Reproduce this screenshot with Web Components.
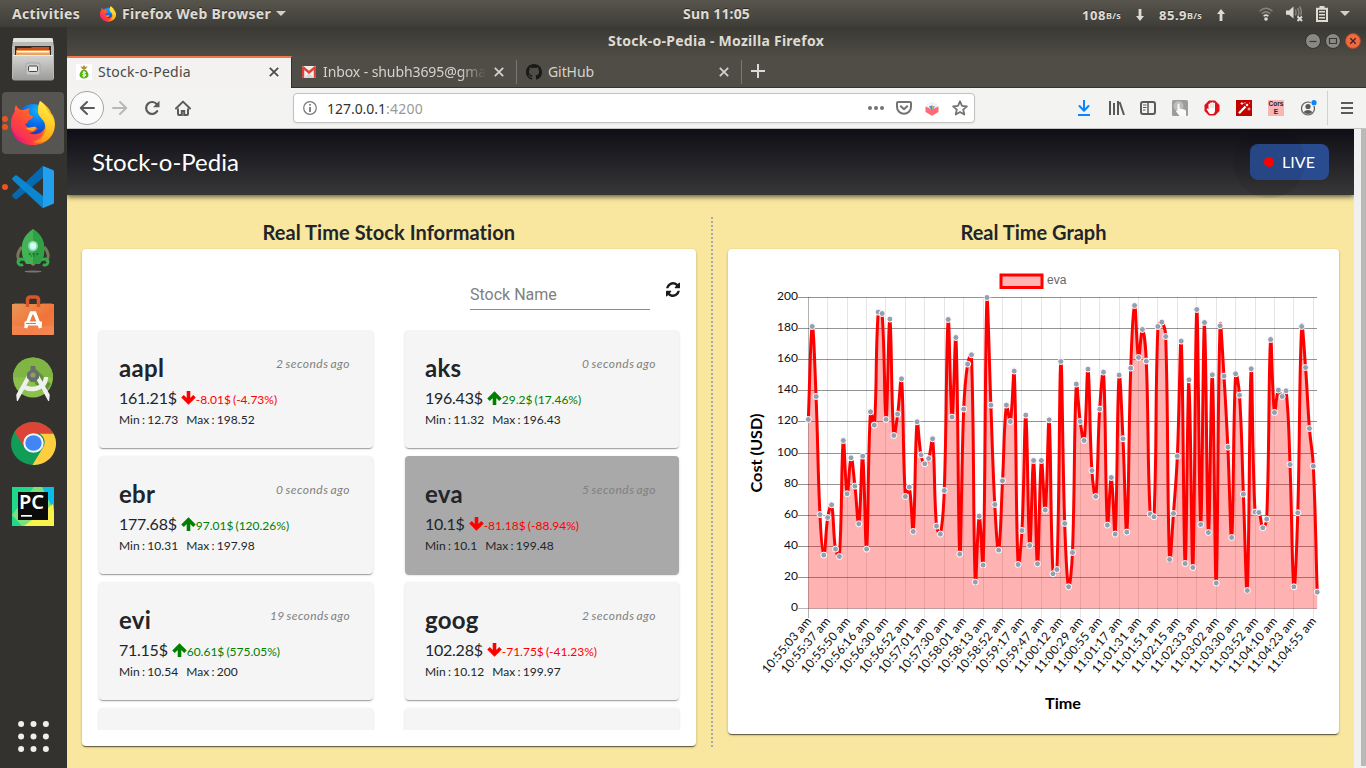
<!DOCTYPE html>
<html lang="en">
<head>
<meta charset="utf-8">
<title>Stock-o-Pedia</title>
<style>
html,body{margin:0;height:100%;overflow:hidden}
body{font-family:"Noto Sans","Open Sans",sans-serif}
</style>
</head>
<body>
<desktop-shell></desktop-shell>
<script>
const define = (name, html, setup) => customElements.define(name, class extends HTMLElement {
  constructor() { super(); this.attachShadow({ mode: 'open' }); }
  connectedCallback() {
    this.shadowRoot.innerHTML = typeof html === 'function' ? html(this) : html;
    if (setup) setup(this, this.shadowRoot);
  }
});

/* ---------- icons: name -> [viewBox, markup] ---------- */
const firefox = `<defs>
<linearGradient id="a" x1=".05" y1=".75" x2="1" y2=".35"><stop offset="0" stop-color="#e31587"/><stop offset=".28" stop-color="#ff3647"/><stop offset=".6" stop-color="#ff8a16"/><stop offset="1" stop-color="#ffcb1f"/></linearGradient>
<linearGradient id="b" x1=".7" y1="0" x2=".4" y2="1"><stop offset="0" stop-color="#fff44f"/><stop offset=".45" stop-color="#ffd02a"/><stop offset="1" stop-color="#ff9a0e"/></linearGradient>
<radialGradient id="c" cx=".65" cy=".2" r=".9"><stop offset="0" stop-color="#12b5ff"/><stop offset=".5" stop-color="#0a6be8"/><stop offset="1" stop-color="#28239a"/></radialGradient>
<linearGradient id="d" x1="0" y1="1" x2=".8" y2="0"><stop offset="0" stop-color="#f0206a"/><stop offset=".5" stop-color="#ff4a3a"/><stop offset="1" stop-color="#ff8020"/></linearGradient></defs>
<circle cx="22" cy="25" r="19" fill="url(#a)"/>
<circle cx="22" cy="20" r="16" fill="url(#c)"/>
<path d="M29 1C35 5 39 9 40 13c3 3 4 8 4 11 0 12-9 21-22 21S0 37 0 24c0-5 1-10 4-13l2 2c7 3 3 17 14 22 7 2 14-2 14-9 0-9-8-10-7-17 0-3 1-6 2-8z" fill="url(#a)"/>
<path d="M29 1c5 3 7 8 8 11 4 4 7 9 6 15 0 5-3 9-6 12-3 3-10 4-15 3 8-1 13-7 13-14 0-9-9-10-8-18 0-4 1-6 2-9z" fill="url(#b)"/>
<path d="M5 5c2 4 4 5 7 5 2-1 5-1 7-2-2 3-1 5 0 7l3 1c0 3-4 4-5 5 0 2-1 2-3 3 3 6 9 4 13 4-2 3-6 5-9 5 7 3 13 0 15-4 0 7-5 11-11 11C10 40 0 34 0 24c0-4 1-8 4-12-1-3 0-5 1-7z" fill="url(#d)"/>
<path d="M15 28c4 0 6-2 10-1 1 1-1 3-3 4-3 0-5-1-7-3z" fill="#ffa51e"/>`;

const ICONS = {
firefox: ['0 0 44 46', firefox],
caret: ['0 0 10 5', '<path d="M0 0h10L5 5z" fill="#d2d0c8"/>'],
down: ['0 0 8 12', '<path d="M2.6 0h2.8v7H8l-4 5-4-5h2.6z" fill="#dfdbd2"/>'],
up: ['0 0 8 12', '<path d="M2.6 12h2.8V5H8L4 0 0 5h2.6z" fill="#dfdbd2"/>'],
wifi: ['0 0 14 14', '<g fill="none" stroke-width="1.5"><path d="M.6 4.2Q7-1.6 13.400 4.200" stroke="#85837b"/><path d="M2.8 6.700Q7 3 11.200 6.700" stroke="#85837b"/><path d="M4.600 9.300Q7 7 9.400 9.300" stroke="#dfdbd2"/></g><circle cx="7" cy="12" r="1.800" fill="#dfdbd2"/>'],
sound: ['0 0 17 16', '<path d="M0 4.500h3L7.500.5v12L3 8.800H0z" fill="#dfdbd2"/><g fill="none" stroke="#85837b" stroke-width="1.500"><path d="M9.300 3.500q1.500 3 0 6M11.500 2q2.700 4.500 0 9M13.500.5q3 4.500 1 9"/></g><path d="M11.500 10.500l4.500 4.500m0-4.500l-4.500 4.500" stroke="#dfdbd2" stroke-width="2"/>'],
battery: ['0 0 12 16', '<path d="M1 2.800h10V15H1z" fill="none" stroke="#dfdbd2" stroke-width="2"/><path d="M3.500 0h5v3h-5zM3 5h6v1.500H3zM3 8h6v1.500H3zM3 11h6v1.500H3z" fill="#dfdbd2"/>'],
files: ['0 0 44 44', `<defs><linearGradient id="f" x2="0" y2="1"><stop stop-color="#d5d5d3"/><stop offset="1" stop-color="#9b9b99"/></linearGradient></defs>
<path d="M3.500 1h37q1 0 1.200 1L43 10v31q0 2-2 2H3q-2 0-2-2V10L2.300 2Q2.500 1 3.500 1z" fill="#b9b9b7"/><path d="M3.500 1h37q1 0 1.200 1l.6 3H1.700l.6-3Q2.500 1 3.500 1z" fill="#e3e3e1"/>
<path d="M4 9h36v10H4z" fill="#322c28"/><path d="M6 11h14l1-1h17v4H6z" fill="#c8501e"/><path d="M5 13h34v5H5z" fill="#f29a4a"/><path d="M6 14h32v1.500H6z" fill="#fff"/><path d="M5 16h34v2H5z" fill="#e9a35c"/>
<path d="M2 18h40v24q0 1.500-1.500 1.500h-37Q2 43.500 2 42z" fill="url(#f)"/><path d="M2 18h40v1H2z" fill="#eee"/>
<rect x="15" y="26" width="14" height="12" rx="2" fill="#c9c9c7" stroke="#a5a5a3"/><rect x="17.500" y="29" width="9" height="5.500" rx="1" fill="#eee" stroke="#444"/>`],
vscode: ['0 0 42 42', '<path d="M31 0l10 4q1 .5 1 1.500v31q0 1-1 1.500l-10 4z" fill="#22a0ee"/><path d="M31 0v12L5 33q-1 .6-2 0L.500 30.500q-.8-1 0-2L30 .5z" fill="#0668ae"/><path d="M31 42V30L5 9.500q-1-.6-2 0L.500 12q-.8 1 0 2L30 41.500z" fill="#0b86cf"/>'],
rocket: ['0 0 36 44', '<ellipse cx="18" cy="42.500" rx="9" ry="1" fill="#77766f"/><path d="M6 18q-7 8-2 15M30 18q7 8 2 15" fill="none" stroke="#7b7659" stroke-width="3"/><path d="M12 33h12l-6 4z" fill="#84805f"/><path d="M18 0c9 6 12 12 12 20 0 7-2 12-5 15H11c-3-3-5-8-5-15C6 12 9 6 18 0z" fill="#43b356"/><path d="M18 0c9 6 12 12 12 20 0 7-2 12-5 15h-7z" fill="#2fa046"/><circle cx="18" cy="17" r="5.200" fill="#8ed9b5"/><circle cx="18" cy="17" r="3.400" fill="#c7fff0"/><circle cx="17" cy="16" r="1.300" fill="#fff"/><path d="M13.500 25h2m2 0h2m2 0h2m-8 2h1m2 0h1" stroke="#116326" stroke-width="1.500"/><g fill="none" stroke="#35ad4b" stroke-width="3"><path d="M8.500 31.500a3.500 3 0 1 0-1 4M27.500 31.500a3.500 3 0 1 1 1 4"/></g>'],
bag: ['0 0 42 41', `<defs><linearGradient id="g" x2="1" y2="1"><stop stop-color="#e9965a"/><stop offset=".6" stop-color="#f07436"/><stop offset="1" stop-color="#f2834d"/></linearGradient></defs><path d="M2 10V8h10l2 2h14l2-2h10v2z" fill="#b4441b"/><path d="M0 9h42v30q0 1-1 1H1q-1 0-1-1z" fill="url(#g)"/><path d="M0 31h42v8q0 1-1 1H1q-1 0-1-1z" fill="#f58b58" opacity=".6"/><path d="M15.500 12V5q0-3 3-3h5q3 0 3 3v7" fill="none" stroke="#d9562a" stroke-width="3.500"/><path d="M13.500 33L19.300 18h3.400l5.800 15" fill="none" stroke="#fff" stroke-width="3.400"/><path d="M12.500 26.500h17.500v4h-17.500z" fill="#fff"/><path d="M14 28h10v1H14z" fill="#ee6d2d"/>`],
studio: ['0 0 42 44', '<circle cx="21" cy="20.500" r="20" fill="#8bc04b"/><path d="M1 20.500a20 20 0 0 1 40 0z" fill="#80b544"/><path d="M22 10l17 17-6 9-10-9z" fill="#5e9138"/><path d="M11 29.500Q17 33 24 31.500 34 29 34 20" fill="none" stroke="#eef0ea" stroke-width="4.500"/><path d="M17 22L5.500 43l-.5-5 10-18zM25 22l11.500 21 .5-5-10-18z" fill="#eef0f0" stroke="#eef0f0" stroke-width="1.500"/><path d="M18.500 9h5v4l3.500 3v5l-4 4h-4l-4-4v-5l3.500-3z" fill="#6a6d6e"/><circle cx="21" cy="18" r="2.600" fill="#8ba05e"/>'],
chrome: ['0 0 44 44', '<circle cx="22" cy="22" r="22" fill="#109d58"/><path d="M22 0a22 22 0 0 1 19.600 12H22a10 10 0 0 0-9.300 13.500L3.500 10A22 22 0 0 1 22 0z" fill="#db4437"/><path d="M41.600 12A22 22 0 0 1 21 44l10-17.500A10 10 0 0 0 28 12z" fill="#ffcd40"/><circle cx="22" cy="21.500" r="10" fill="#f5f5f5"/><circle cx="22" cy="21.500" r="8" fill="#4285f4"/>'],
pycharm: ['0 0 42 42', '<path d="M0 2h42v39H0z" fill="#21d789"/><path d="M26 2h16v30z" fill="#08bde8"/><path d="M0 30L22 2h8l12 24v15H10z" fill="#7fe07a"/><path d="M12 41l29-22 1 8v14z" fill="#f8f24a"/><path d="M6 7h30v28H6z" fill="#0b0b0b"/><path d="M9 30h11v1.700H9z" fill="#fff"/>'],
grid: ['0 0 30 30', [3,15,27].map(y=>[3,15,27].map(x=>`<circle cx="${x}" cy="${y}" r="2.900" fill="#eeeeec"/>`).join('')).join('')],
money: ['0 0 16 16', '<path d="M0 0h16v16H0z" fill="#fff"/><path d="M4.500 2l2 1L8 1l1.500 2 2-1L10 5H6z" fill="#b98a4c"/><path d="M8 5c3 1.500 4.500 3.500 4.500 6 0 2-2 3.500-4.500 3.500S3.500 13 3.500 11C3.500 8.500 5 6.500 8 5z" fill="#5ab312"/><path d="M9.800 8.500q-3-1-3.200.5 0 .8 1.500 1 1.700.2 1.700 1.200-.4 1.500-3.500.5M8 7v6.500" fill="none" stroke="#fff" stroke-width="1"/>'],
close: ['0 0 10 10', '<path d="M.8.8l8.400 8.400m0-8.400L.8 9.200" stroke="currentColor" stroke-width="1.700"/>'],
plus: ['0 0 14 14', '<path d="M7 0v14M0 7h14" stroke="#dcdad5" stroke-width="2"/>'],
gmail: ['0 0 14 12', '<path d="M1 0h12q1 0 1 1v10q0 1-1 1H1q-1 0-1-1V1q0-1 1-1z" fill="#f2efeb"/><path d="M2.500 12l4.500-5 4.500 5z" fill="#d8d5d0"/><path d="M0 1.500Q0 0 1.300 0L7 4.800 12.700 0Q14 0 14 1.500V11q0 1-1 1h-1.200V4L7 8 2.200 4v8H1q-1 0-1-1z" fill="#dc4437"/>'],
github: ['0 0 16 16', '<path fill="#191919" d="M8 0C3.580 0 0 3.580 0 8c0 3.540 2.290 6.530 5.470 7.590.4.070.55-.17.55-.38 0-.19-.01-.82-.01-1.490-2.010.37-2.530-.49-2.690-.94-.09-.23-.48-.94-.82-1.130-.28-.15-.68-.52-.01-.53.63-.01 1.080.58 1.230.82.720 1.210 1.870.87 2.330.66.070-.52.280-.87.510-1.070-1.780-.2-3.640-.89-3.640-3.950 0-.87.310-1.590.820-2.150-.08-.2-.36-1.020.08-2.120 0 0 .67-.21 2.200.82.640-.18 1.320-.27 2-.27s1.360.09 2 .27c1.530-1.040 2.200-.82 2.200-.82.440 1.100.160 1.920.080 2.120.510.560.820 1.270.820 2.150 0 3.070-1.870 3.750-3.650 3.950.290.250.540.730.540 1.480 0 1.070-.01 1.930-.01 2.200 0 .21.150.46.550.38A8.010 8.010 0 0 0 16 8c0-4.420-3.580-8-8-8z"/>'],
back: ['0 0 16 16', '<path d="M15 8H2m6-6L1.800 8 8 14" fill="none" stroke="currentColor" stroke-width="2" stroke-linecap="round" stroke-linejoin="round"/>'],
forward: ['0 0 16 16', '<path d="M1 8h13M8 2l6.200 6L8 14" fill="none" stroke="currentColor" stroke-width="2" stroke-linecap="round" stroke-linejoin="round"/>'],
reload: ['0 0 16 16', '<path d="M13.200 11.200A6 6 0 1 1 13 4.500" fill="none" stroke="#5a5a58" stroke-width="2.200" stroke-linecap="round"/><path d="M15.500.8v6.500H9z" fill="#5a5a58"/>'],
home: ['0 0 16 16', '<path d="M1 8.500L8 1.600l7 6.900" fill="none" stroke="#5a5a58" stroke-width="2" stroke-linecap="round" stroke-linejoin="round"/><path d="M3 8.500v5.500q0 1 1 1h2.800v-4h2.400v4H12q1 0 1-1V8.500" fill="none" stroke="#5a5a58" stroke-width="2"/>'],
info: ['0 0 14 14', '<circle cx="7" cy="7" r="6.300" fill="none" stroke="#777" stroke-width="1.200"/><path d="M6.100 3h1.800v1.600H6.100zM6.100 6h1.800v5H6.100z" fill="#777"/>'],
dots: ['0 0 16 4', '<circle cx="2" cy="2" r="2" fill="#737373"/><circle cx="8" cy="2" r="2" fill="#737373"/><circle cx="14" cy="2" r="2" fill="#737373"/>'],
pocket: ['0 0 16 14', '<path d="M2 1h12q1 0 1 1v4a7 6.800 0 0 1-14 0V2q0-1 1-1z" fill="none" stroke="#737373" stroke-width="2"/><path d="M4.800 5.200L8 8.200l3.200-3" fill="none" stroke="#737373" stroke-width="2" stroke-linecap="round" stroke-linejoin="round"/>'],
box: ['0 0 14 15', '<path d="M1 4l6-3.500L13 4v7l-6 4-6-4z" fill="#f4f1f1"/><path d="M.5 5.500L4 7l3 2 3-2 3.500-1.500V11L7 14.800.5 11z" fill="#ff6b75"/><path d="M4 5.500l3-1 3 1L7 9.500z" fill="#3c8de0"/><path d="M7 5l2 .5L7.500 8z" fill="#ffc83c"/>'],
star: ['0 0 16 16', '<path d="M8 1.300l2 4.500 4.900.5-3.700 3.300 1.100 4.900L8 12l-4.300 2.500 1.100-4.900L1.100 6.300 6 5.800z" fill="none" stroke="#737373" stroke-width="1.800" stroke-linejoin="round"/>'],
download: ['0 0 12 16', '<path d="M6 .5v10M1.500 6L6 10.700 10.500 6" fill="none" stroke="#0a84ff" stroke-width="2" stroke-linecap="round" stroke-linejoin="round"/><path d="M0 14h12v2H0z" fill="#0a84ff"/>'],
library: ['0 0 16 14', '<path d="M1 0v14M5 2v12M9 0v14M10.600 1l4.400 13" stroke="#5a5a58" stroke-width="2"/>'],
sidebar: ['0 0 16 14', '<rect x="1" y="1" width="14" height="12" rx="2" fill="none" stroke="#5a5a58" stroke-width="2"/><path d="M8 1v12" stroke="#5a5a58" stroke-width="1.500"/><path d="M3 4h3.500M3 6.500h3.500M3 9h2.500" stroke="#5a5a58"/>'],
touch: ['0 0 16 16', '<rect width="16" height="16" rx="1.500" fill="#9c9c9c"/><circle cx="6.500" cy="6" r="5" fill="#bdbdbd"/><path d="M5.500 4q1-1 2 0v4.500l5 1q1.500.5 1.500 1.500v5H7.500l-3.500-4.500q0-1.500 1.500-1z" fill="#fafafa"/>'],
adblock: ['0 0 16 16', '<path d="M5 .5h6l4.500 4.500v6L11 15.500H5L.5 11V5z" fill="#e20f1b"/><path d="M5 13L2.500 9q.5-1 2 0V4q.8-.9 1.500 0V3q.8-.9 1.600 0V2.500q.9-.8 1.700 0V3q.9-.8 1.700 0v8q-.5 2.500-2 3H6z" fill="#fff"/><path d="M6.200 4v4M8 3.500V8M9.700 3.500V8" stroke="#e7a2a2" stroke-width=".5"/>'],
wand: ['0 0 16 16', '<path d="M0 0h16v16H0z" fill="#c10000"/><path d="M3 13.200L9.500 6.500" stroke="#fff" stroke-width="2.200"/><path d="M10.300 5.700l1.500-1.500" stroke="#fff" stroke-width="2.200"/><path d="M6 2v3M4.500 3.500h3M13 7.500v3M11.500 9h3M9 2v1.500M13.500 2.500v1" stroke="#fff" stroke-width=".8"/>'],
account: ['0 0 16 16', '<circle cx="7" cy="8.500" r="6.500" fill="none" stroke="#5a5a58" stroke-width="1.200"/><circle cx="7" cy="6.500" r="2.600" fill="#5a5a58"/><path d="M2.500 12q4.500-4 9 0-1.500 2-4.500 2t-4.500-2z" fill="#5a5a58"/><circle cx="13" cy="2.700" r="3.400" fill="#f3f3f2"/><circle cx="13" cy="2.700" r="2.600" fill="#0a84ff"/>'],
menu: ['0 0 12 12', '<path d="M0 1h12M0 6h12M0 11h12" stroke="#5a5a58" stroke-width="2"/>'],
sync: ['0 0 1536 1536', '<path fill="#1b1b1b" d="M1511 928q0 5-1 7-64 268-268 434.500T764 1536q-146 0-282.500-55T238 1324l-129 129q-19 19-45 19t-45-19-19-45V960q0-26 19-45t45-19h448q26 0 45 19t19 45-19 45l-137 137q71 66 161 102t187 36q134 0 250-65t186-179q11-17 53-117 8-23 30-23h192q13 0 22.500 9.500t9.500 22.500zm25-800v448q0 26-19 45t-45 19h-448q-26 0-45-19t-19-45 19-45l138-138Q969 256 768 256q-134 0-250 65T332 500q-11 17-53 117-8 23-30 23H50q-13 0-22.500-9.500T18 608v-7q65-268 270-434.500T768 0q146 0 284 55.500T1297 212l130-129q19-19 45-19t45 19 19 45z"/>'],
arrow: ['0 0 15 14', '<path d="M7.500 0v11.500M1.500 6l6 6 6-6" fill="none" stroke="currentColor" stroke-width="3.600" transform="translate(0 -.7)"/>'],
min: ['0 0 16 16', '<circle cx="8" cy="8" r="7.500" fill="#8a8983" stroke="#33322e"/><path d="M4.500 8.500h7" stroke="#3a3935" stroke-width="1.200"/>'],
max: ['0 0 16 16', '<circle cx="8" cy="8" r="7.500" fill="#8a8983" stroke="#33322e"/><path d="M4.500 5.500h7v5h-7z" fill="none" stroke="#3a3935" stroke-width="1.200"/>'],
quit: ['0 0 16 16', '<circle cx="8" cy="8" r="7.500" fill="#f0693f" stroke="#a84a2c"/><path d="M5.300 5.300l5.400 5.400m0-5.400l-5.400 5.400" stroke="#3a2520" stroke-width="1.300"/>']
};
define('ui-icon', el => {
  const [vb, body] = ICONS[el.getAttribute('name')];
  return `<style>:host{display:block;flex:none;width:${el.getAttribute('w')}px;height:${el.getAttribute('h')}px}svg{display:block;width:100%;height:100%}</style><svg viewBox="${vb}" preserveAspectRatio="none">${body}</svg>`;
});

/* Text run spaced out to a given advance width. */
define('ui-label', `<style>:host{display:block;flex:none;white-space:nowrap}span{display:inline-block}</style><span><slot></slot></span>`, (el, root) => {
  const w = +el.getAttribute('w'), s = root.querySelector('span');
  el.style.width = w + 'px';
  s.style.letterSpacing = (w - s.getBoundingClientRect().width) / el.textContent.length + 'px';
});

define('top-bar', `<style>
:host{display:flex;align-items:center;height:27px;box-sizing:border-box;padding-left:12px;background:linear-gradient(#57554c,#3e3d38);color:#dfdbd2;font-weight:700;font-size:14px;text-shadow:0 -1px 0 #2b2a27}
ui-label,ui-icon{margin-left:var(--m,0)}
.n{font-size:13px}.s{font-size:9px}</style>
<ui-label w="68">Activities</ui-label>
<ui-icon style="--m:20px" name="firefox" w="16" h="16"></ui-icon>
<ui-label style="--m:6px" w="149">Firefox Web Browser</ui-label>
<ui-icon style="--m:5px" name="caret" w="10" h="5"></ui-icon>
<ui-label style="--m:397px;margin-top:-1px" w="67">Sun 11:05</ui-label>
<ui-label class="n" style="--m:332px;padding-top:2px" w="24">108</ui-label><ui-label class="s" w="15" style="padding-top:3px">B/s</ui-label>
<ui-icon style="--m:15px;padding-top:2px" name="down" w="8" h="12"></ui-icon>
<ui-label class="n" style="--m:15px;padding-top:2px" w="28">85.9</ui-label><ui-label class="s" w="15" style="padding-top:3px">B/s</ui-label>
<ui-icon style="--m:15px;padding-top:2px" name="up" w="8" h="12"></ui-icon>
<ui-icon style="--m:34px" name="wifi" w="14" h="14"></ui-icon>
<ui-icon style="--m:13px" name="sound" w="17" h="16"></ui-icon>
<ui-icon style="--m:13px" name="battery" w="12" h="16"></ui-icon>
<ui-icon style="--m:12px" name="caret" w="10" h="5"></ui-icon>`);

define('dock-item', el => `<style>:host{display:grid;place-items:center;position:relative;height:64px;flex:none}
:host([active])::before{content:"";position:absolute;inset:1px 2px 1px 2px;border-radius:4px;background:#565551}
::slotted(*){position:relative}
i{position:absolute;left:2px;width:6px;height:6px;border-radius:3px;background:#e95420;top:var(--t)}</style>
${(el.getAttribute('dots') || '').split(' ').filter(Boolean).map(t => `<i style="--t:${t}px"></i>`).join('')}<slot></slot>`);

define('app-dock', `<style>:host{display:flex;flex-direction:column;width:67px;box-sizing:border-box;background:#33322e;padding-right:1px}
dock-item:last-child{margin-top:auto}div{position:relative;display:grid;place-items:center}
span{position:absolute;left:7px;top:7px;color:#fff;font:600 20px/20px "Noto Sans",sans-serif}</style>
<dock-item><ui-icon name="files" w="44" h="44"></ui-icon></dock-item>
<dock-item active dots="25 33"><ui-icon name="firefox" w="44" h="46"></ui-icon></dock-item>
<dock-item dots="29"><ui-icon name="vscode" w="42" h="42"></ui-icon></dock-item>
<dock-item><ui-icon name="rocket" w="34" h="44"></ui-icon></dock-item>
<dock-item><ui-icon name="bag" w="42" h="41"></ui-icon></dock-item>
<dock-item><ui-icon name="studio" w="42" h="44"></ui-icon></dock-item>
<dock-item><ui-icon name="chrome" w="45" h="43"></ui-icon></dock-item>
<dock-item><div style="top:-1px"><ui-icon name="pycharm" w="42" h="42"></ui-icon><span>PC</span></div></dock-item>
<dock-item><ui-icon name="grid" w="31" h="31"></ui-icon></dock-item>`);

define('title-bar', `<style>:host{display:flex;align-items:center;height:29px;box-sizing:border-box;padding:0 0 2px 541px;background:linear-gradient(#3a3935,#4d4b43);color:#dfdbd2;font-weight:700;font-size:14px}
div{display:flex;gap:4px;margin-left:481px}</style><ui-label w="216">Stock-o-Pedia - Mozilla Firefox</ui-label>
<div><ui-icon name="min" w="16" h="16"></ui-icon><ui-icon name="max" w="16" h="16"></ui-icon><ui-icon name="quit" w="16" h="16"></ui-icon></div>`);

define('browser-tab', `<style>:host{display:flex;align-items:center;height:32px;box-sizing:border-box;padding:0 13px 0 9px;width:225px;color:#d5d3cd;flex:none;background:linear-gradient(#7a7871,#7a7871) right 4px/1px 24px no-repeat}
:host([selected]){background:#f3f2f0;border-top:2px solid #f07746;border-right:1px solid #33322e;color:#4a4a48;padding:0 12px 2px 9px}
::slotted(ui-label){margin:-1px 0 0 6px}::slotted([close]){margin-left:auto!important}
::slotted([fade]){-webkit-mask-image:linear-gradient(90deg,#000 84%,transparent)}</style><slot></slot>`);

define('tab-strip', `<style>:host{display:flex;align-items:center;height:32px;background:#4f4d45;font-size:14px;box-shadow:inset 0 -1px #34332f}</style>
<browser-tab selected><ui-icon name="money" w="16" h="16"></ui-icon><ui-label w="93">Stock-o-Pedia</ui-label><ui-icon close name="close" w="10" h="10"></ui-icon></browser-tab>
<browser-tab><ui-icon name="gmail" w="14" h="12" style="margin-left:1px"></ui-icon><ui-label fade w="163" style="margin-left:7px">Inbox - shubh3695@gma</ui-label><ui-icon close name="close" w="10" h="10"></ui-icon></browser-tab>
<browser-tab><ui-icon name="github" w="16" h="16"></ui-icon><ui-label w="46">GitHub</ui-label><ui-icon close name="close" w="10" h="10"></ui-icon></browser-tab>
<ui-icon style="margin:-2px 0 0 9px" name="plus" w="14" h="14"></ui-icon>`);

define('nav-bar', `<style>:host{display:flex;align-items:center;height:41px;box-sizing:border-box;background:#f3f3f2;border-bottom:1px solid #c6c4c2;padding-left:3px;color:#5a5a58}
.back{display:grid;place-items:center;width:32px;height:32px;border:1px solid #a4a3a1;border-radius:50%;background:#fbfbfb;flex:none}
.url{display:flex;align-items:center;width:680px;height:28px;border:1px solid #c3c2c0;border-radius:4px;background:#fff;margin-left:102px;box-shadow:0 1px 2px #0001;font-size:14px;flex:none;color:#333}
ui-icon,ui-label{margin-left:var(--m,0)}
.sep{width:1px;height:34px;background:#d2d1cf;margin-left:10px}
.cors{width:16px;height:16px;background:#f9b4b4;color:#222;font:bold 6.500px/8px "Liberation Sans",sans-serif;text-align:center;margin-left:16px;flex:none}.cors div{height:8px}</style>
<div class="back"><ui-icon name="back" w="16" h="16"></ui-icon></div>
<ui-icon style="--m:8px;color:#b9b8b6" name="forward" w="16" h="16"></ui-icon>
<ui-icon style="--m:16px" name="reload" w="16" h="16"></ui-icon>
<ui-icon style="--m:15px" name="home" w="16" h="16"></ui-icon>
<div class="url"><ui-icon style="--m:9px;margin-top:-1px" name="info" w="14" h="14"></ui-icon><ui-label style="--m:10px" w="59">127.0.0.1</ui-label><ui-label style="color:#999" w="37">:4200</ui-label>
<ui-icon style="--m:445px" name="dots" w="16" h="4"></ui-icon><ui-icon style="--m:12px" name="pocket" w="16" h="14"></ui-icon><ui-icon style="--m:13px" name="box" w="14" h="15"></ui-icon><ui-icon style="--m:13px" name="star" w="16" h="16"></ui-icon></div>
<ui-icon style="--m:103px" name="download" w="12" h="16"></ui-icon>
<ui-icon style="--m:19px" name="library" w="16" h="14"></ui-icon>
<ui-icon style="--m:15px" name="sidebar" w="16" h="14"></ui-icon>
<ui-icon style="--m:16px" name="touch" w="16" h="16"></ui-icon>
<ui-icon style="--m:16px" name="adblock" w="16" h="16"></ui-icon>
<ui-icon style="--m:16px" name="wand" w="16" h="16"></ui-icon>
<div class="cors"><div>Cors</div><div>E</div></div>
<ui-icon style="--m:17px" name="account" w="16" h="16"></ui-icon>
<div class="sep"></div><ui-icon style="--m:13px" name="menu" w="12" h="12"></ui-icon>`);

define('site-header', `<style>:host{display:flex;align-items:center;justify-content:space-between;height:66px;box-sizing:border-box;padding:0 25px;background:linear-gradient(#0f0e17,#373738);box-shadow:0 2px 5px #0009;color:#fff;font-family:Lato,sans-serif;position:relative;flex:none}
h1{font-weight:400;font-size:24px;margin:0 0 2px}
.live{position:relative;display:flex;align-items:center;gap:8px;width:79px;height:36px;box-sizing:border-box;padding-left:14px;border-radius:8px;background:#294b8f;font-size:16px;margin-bottom:1px}
i{width:10px;height:10px;border-radius:5px;background:red}i,ui-label{position:relative;z-index:1}
.live::after{content:"";position:absolute;left:-17px;top:-18px;width:72px;height:72px;border-radius:50%;background:#0000000f}</style>
<h1><ui-label w="147">Stock-o-Pedia</ui-label></h1><div class="live"><i></i><ui-label w="33">LIVE</ui-label></div>`);

define('stock-card', el => { const a = n => el.getAttribute(n); const up = a('delta')[0] !== '-';
return `<style>:host{display:block;height:118px;box-sizing:border-box;padding:23px 23px 0 20px;border-radius:4px;background:#f5f5f5;color:#212529;box-shadow:0 2px 1px -1px #0003,0 1px 1px #00000024,0 1px 3px #0000001f}
:host([selected]){background:#a9a9a9}
.top{display:flex;justify-content:space-between;height:32px}
b{font-size:24px;line-height:30px;letter-spacing:.3px}em{font-size:12px;line-height:22px;color:gray;word-spacing:-1.300px}
.price{display:flex;align-items:baseline;height:26px;line-height:26px;font-size:16px;letter-spacing:-.25px}
ui-icon{margin-left:4px;align-self:center;margin-top:-1px;${up ? 'transform:rotate(180deg)' : ''}}
.price,.chg{white-space:nowrap}.chg{font-size:12px;letter-spacing:0;word-spacing:-1px;color:${up ? 'green' : 'red'}}.price ui-icon{color:${up ? 'green' : 'red'}}
.range{display:flex;gap:8px;font-size:12px;line-height:17px;word-spacing:-1px;letter-spacing:.07px}</style>
${a('name') ? `<div class="top"><b>${a('name')}</b><em><ui-label w="${a('ago').length > 13 ? 80 : 74}">${a('ago')}</ui-label></em></div>
<div class="price"><span>${a('price')}$</span><ui-icon name="arrow" w="15" h="14"></ui-icon><span class="chg">${a('delta')}$ (${a('pct')}%)</span></div>
<div class="range"><span>Min : ${a('min')}</span><span>Max : ${a('max')}</span></div>` : ''}`; });

define('stock-list', `<style>:host{display:flex;flex-direction:column;height:497px;box-sizing:border-box;padding:0 17px 16px;background:#fff;border-radius:4px;box-shadow:0 2px 1px -1px #0006,0 1px 1px #0004,0 1px 3px #0003}
.tools{display:flex;justify-content:flex-end;height:81px;box-sizing:border-box;padding-top:32px;flex:none}
.field{width:180px;height:28px;border-bottom:1px solid #8b8b8b;font:16px/27px Roboto,sans-serif;color:#808080}
ui-icon{margin:1px -1px 0 16px}
.grid{display:grid;grid-template-columns:274px 274px;column-gap:32px;row-gap:8px;overflow:hidden;flex:1;align-content:start;padding:0 3px;margin:0 -3px}</style>
<div class="tools"><div class="field">Stock Name</div><ui-icon name="sync" w="14" h="15"></ui-icon></div>
<div class="grid">
<stock-card name="aapl" ago="2 seconds ago" price="161.21" delta="-8.01" pct="-4.73" min="12.73" max="198.52"></stock-card>
<stock-card name="aks" ago="0 seconds ago" price="196.43" delta="29.2" pct="17.46" min="11.32" max="196.43"></stock-card>
<stock-card name="ebr" ago="0 seconds ago" price="177.68" delta="97.01" pct="120.26" min="10.31" max="197.98"></stock-card>
<stock-card selected name="eva" ago="5 seconds ago" price="10.1" delta="-81.18" pct="-88.94" min="10.1" max="199.48"></stock-card>
<stock-card name="evi" ago="19 seconds ago" price="71.15" delta="60.61" pct="575.05" min="10.54" max="200"></stock-card>
<stock-card name="goog" ago="2 seconds ago" price="102.28" delta="-71.75" pct="-41.23" min="10.12" max="199.97"></stock-card>
<stock-card name="" delta="0"></stock-card><stock-card name="" delta="0"></stock-card></div>`);

/* Sample heights in thirds of a pixel: 112 is 200 USD, 1045 is 0. */
const SAMPLES = [479,200,410,764,886,773,735,868,890,542,702,594,679,792,589,868,456,496,157,161,479,178,527,463,357,710,682,815,486,585,612,596,537,799,823,692,179,472,233,883,448,313,285,967,769,916,113,436,734,871,663,436,485,334,914,812,466,857,602,912,602,751,480,942,929,305,791,981,878,373,485,542,328,632,710,448,337,796,653,823,346,537,817,325,137,293,209,304,763,771,200,187,230,899,761,589,244,911,360,923,149,794,188,818,345,970,198,349,562,833,342,406,703,992,327,757,758,804,778,239,458,391,410,393,614,981,759,200,323,506,619,997];
const TIMES = '10:55:03 10:55:37 10:55:50 10:56:16 10:56:30 10:56:52 10:57:01 10:57:30 10:58:01 10:58:13 10:58:52 10:59:17 10:59:47 11:00:12 11:00:29 11:00:55 11:01:17 11:01:31 11:01:51 11:02:15 11:02:33 11:03:02 11:03:30 11:03:52 11:04:10 11:04:23 11:04:55'.split(' ');
define('stock-chart', () => {
  const x0 = 808.3, step = (1317.2 - 808.3) / 131, top = 297.5, bottom = 608.5;
  const p = SAMPLES.map((v, i) => [x0 + i * step, v / 3 + 259.8]);
  const cap = y => Math.max(top, Math.min(bottom, y));
  const dist = (a, b) => Math.hypot(a[0] - b[0], a[1] - b[1]);
  const c = p.map((q, i) => {
    const a = p[i - 1] || q, b = p[i + 1] || q, d1 = dist(a, q), d2 = dist(q, b), f1 = .4 * d1 / (d1 + d2), f2 = .4 * d2 / (d1 + d2);
    return [[q[0] - f1 * (b[0] - a[0]), cap(q[1] - f1 * (b[1] - a[1]))], [q[0] + f2 * (b[0] - a[0]), cap(q[1] + f2 * (b[1] - a[1]))]];
  });
  let d = `M${p[0]}`;
  for (let i = 1; i < p.length; i++) d += `C${c[i - 1][1]} ${c[i][0]} ${p[i]}`;
  let g = '';
  for (let i = 0; i <= 10; i++) {
    const y = Math.round(297 + i * 31.1) + .5;
    g += `<path d="M798 ${y}H1317" stroke="rgba(0,0,0,${i === 10 ? .28 : .42})"/><text x="798" y="${Math.round(y - .5) + 3}" text-anchor="end">${200 - i * 20}</text>`;
  }
  TIMES.forEach((t, i) => {
    const x = Math.floor(x0 + i * step * 5) + .5;
    g += `<path d="M${x} 297V618" stroke="rgba(0,0,0,${i ? .1 : .3})"/><text text-anchor="end" textLength="69" transform="translate(${x + 1} 619.5) rotate(-50)" y="3">${t} am</text>`;
  });
  return `<style>:host{display:block;height:485px;background:#fff;border-radius:4px;box-shadow:0 2px 1px -1px #0006,0 1px 1px #0004,0 1px 3px #0003}svg{display:block}text{font:12px Lato,sans-serif;fill:#111}.t{font-weight:700;font-size:16px;fill:#000}</style>
<svg width="611" height="485" viewBox="728 249 611 485"><rect x="1001" y="275" width="41" height="12.500" fill="#ffb3b3" stroke="red" stroke-width="3"/><text x="1047" y="284" style="font-family:'Liberation Sans',sans-serif;fill:#666">eva</text>
${g}<path d="${d}V608.500H${x0}Z" fill="rgba(255,0,0,.3)"/><path d="${d}" fill="none" stroke="red" stroke-width="3"/>
${p.map(q => `<circle cx="${q[0].toFixed(1)}" cy="${q[1].toFixed(1)}" r="3" fill="#949fb1" stroke="#fff"/>`).join('')}
<text class="t" transform="translate(762 453) rotate(-90)" text-anchor="middle" textLength="79" lengthAdjust="spacingAndGlyphs">Cost (USD)</text><text class="t" x="1063" y="709" text-anchor="middle" textLength="36" lengthAdjust="spacingAndGlyphs">Time</text></svg>`;
});

define('page-panel', `<style>:host{display:block}h2{margin:0;height:32px;font:700 20px/30px Lato,sans-serif;color:#212529;display:flex;justify-content:center}</style><h2><slot name="title"></slot></h2><slot></slot>`);

define('stock-page', `<style>:host{display:flex;flex-direction:column;width:1287px;background:#f9e79f;font-family:Lato,sans-serif;overflow:hidden}
main{display:grid;grid-template-columns:614px 2px 611px;column-gap:15px;padding:22px 15px 0;flex:1;align-items:start}
.rule{height:530px;background:repeating-linear-gradient(#a9a9a9 0 2px,transparent 2px 4px)}</style>
<site-header></site-header><main>
<page-panel><ui-label slot="title" w="253">Real Time Stock Information</ui-label><stock-list></stock-list></page-panel>
<div class="rule"></div>
<page-panel><ui-label slot="title" w="146">Real Time Graph</ui-label><stock-chart></stock-chart></page-panel></main>`);

define('desktop-shell', `<style>:host{display:grid;grid-template:27px 741px/67px 1299px;width:1366px;height:768px;overflow:hidden}
top-bar{grid-column:1/3}.win{display:flex;flex-direction:column;min-width:0}
.view{display:flex;flex:1;min-height:0}.bar{flex:1;background:#f0f0f0;padding-left:7px}.bar div{height:637px;background:#b9b9b8}</style>
<top-bar></top-bar><app-dock></app-dock><div class="win"><title-bar></title-bar><tab-strip></tab-strip><nav-bar></nav-bar><div class="view"><stock-page></stock-page><div class="bar"><div></div></div></div></div>`);
</script>
</body>
</html>
